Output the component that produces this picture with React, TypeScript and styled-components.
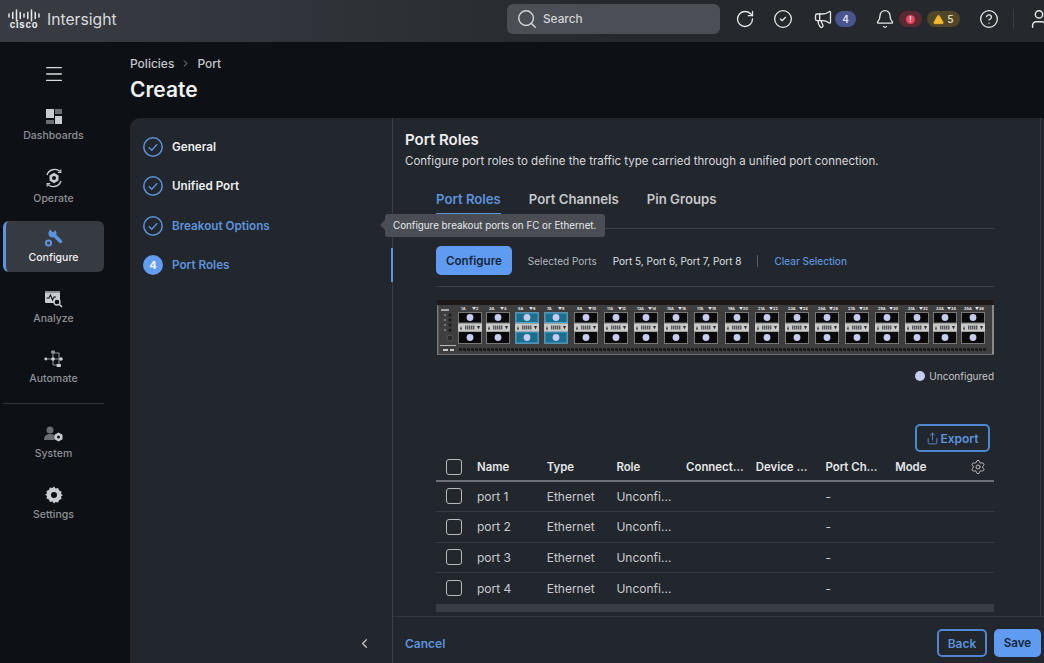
import { createGlobalStyle, styled } from "styled-components";
import {
  Bell,
  ChevronLeft,
  ChevronRight,
  CircleCheck,
  CircleHelp,
  Megaphone,
  Menu,
  RotateCw,
  Search,
  Settings,
  Share,
  TriangleAlert,
  User,
} from "lucide-react";
import type { ReactNode } from "react";

const GlobalStyle = createGlobalStyle`
  html, body {
    margin: 0;
    padding: 0;
    background: #0d1014;
    font-family: Inter, "Liberation Sans", sans-serif;
    color: #e8eaed;
    overflow: hidden;
  }
  * { box-sizing: border-box; }
`;

const Page = styled.div`
  width: 1044px;
  height: 663px;
  display: flex;
  flex-direction: column;
  overflow: hidden;
`;

/* top bar */
const TopBar = styled.header`
  height: 42px;
  flex: none;
  display: flex;
  align-items: center;
  padding-bottom: 4px;
  background: linear-gradient(90deg, #393d43 0%, #30343a 30%, #25282d 60%);
  overflow: hidden;
`;

const Brand = styled.div`
  width: 507px;
  flex: none;
  display: flex;
  align-items: center;
  padding-left: 8px;
  gap: 7px;
`;

const CiscoMark = styled.div`
  width: 32px;
  display: flex;
  flex-direction: column;
  align-items: center;
  line-height: 1;
`;

const CiscoWord = styled.span`
  font-size: 9.5px;
  font-weight: 700;
  letter-spacing: 0.7px;
  color: #e6e8ea;
  margin-top: -2px;
`;

const BrandName = styled.span`
  font-size: 15.7px;
  font-weight: 400;
  color: #d8dadd;
`;

const SearchBox = styled.div`
  width: 213px;
  height: 30px;
  flex: none;
  background: #4b4f55;
  border-radius: 6px;
  display: flex;
  align-items: center;
  gap: 5px;
  padding-left: 9px;
  font-size: 11.8px;
  font-weight: 500;
  color: #d2d4d7;
`;

const TopIcons = styled.div`
  display: flex;
  align-items: center;
  color: #e4e6e8;
  margin-left: 15px;
`;

const TopIcon = styled.span<{ $gap?: number }>`
  display: flex;
  margin-left: ${(p) => p.$gap ?? 0}px;
`;

const Pill = styled.span<{ $bg: string; $color: string; $w: number; $gap: number }>`
  height: 16px;
  width: ${(p) => p.$w}px;
  margin-left: ${(p) => p.$gap}px;
  border-radius: 8px;
  background: ${(p) => p.$bg};
  color: ${(p) => p.$color};
  font-size: 10px;
  font-weight: 600;
  display: flex;
  align-items: center;
  justify-content: center;
  gap: 3px;
`;

const RedDot = styled.span`
  width: 9px;
  height: 9px;
  background: #f0455e;
  border-radius: 50%;
  color: #fff;
  font-size: 7px;
  font-weight: 700;
  line-height: 9px;
  text-align: center;
`;

const TopDivider = styled.span`
  width: 1px;
  height: 20px;
  background: #3a3e44;
  margin-left: 14px;
`;

/* body */
const Body = styled.div`
  flex: 1;
  min-height: 0;
  display: flex;
`;

const Sidebar = styled.nav`
  width: 130px;
  flex: none;
  padding: 21px 26px 0 3px;
  display: flex;
  flex-direction: column;
  align-items: stretch;
`;

const Burger = styled.div`
  display: flex;
  justify-content: center;
  color: #d9dbde;
  height: 22px;
  margin-bottom: 15px;
`;

const NavItem = styled.div<{ $active?: boolean }>`
  height: 51px;
  margin-bottom: 9.5px;
  display: flex;
  flex-direction: column;
  align-items: center;
  justify-content: center;
  gap: 4px;
  border-radius: 6px;
  font-size: 10.5px;
  font-weight: 500;
  color: ${(p) => (p.$active ? "#f0f1f3" : "#8e9196")};
  background: ${(p) => (p.$active ? "#363a41" : "transparent")};
  border-left: 3px solid ${(p) => (p.$active ? "#5c94e0" : "transparent")};
  padding-right: 3px;
  svg {
    display: block;
  }
`;

const NavRule = styled.div`
  height: 1px;
  background: #33373c;
  margin: 0 0 14px;
`;

const Main = styled.main`
  flex: 1;
  min-width: 0;
  display: flex;
  flex-direction: column;
`;

const Crumbs = styled.div`
  display: flex;
  align-items: center;
  gap: 6px;
  height: 16px;
  margin-top: 13px;
  font-size: 12px;
  font-weight: 500;
  color: #c4c6ca;
`;

const PageTitle = styled.h1`
  margin: 5px 0 0;
  font-size: 21px;
  line-height: 28px;
  font-weight: 600;
  color: #f0f1f3;
`;

const Panel = styled.section`
  flex: 1;
  min-height: 0;
  margin-top: 14px;
  display: flex;
  background: #22262d;
  border-radius: 10px 0 0 0;
`;

const Steps = styled.div`
  width: 263px;
  flex: none;
  padding: 9.500px 0 0 13px;
  display: flex;
  flex-direction: column;
  border-right: 1px solid #3b3f46;
  position: relative;
`;

const StepRow = styled.div<{ $tone: "done" | "link" }>`
  height: 39.3px;
  display: flex;
  align-items: center;
  gap: 9px;
  font-size: 11.7px;
  font-weight: 600;
  color: ${(p) => (p.$tone === "link" ? "#5d93dc" : "#eceef0")};
`;

const StepNumber = styled.span`
  width: 20px;
  height: 20px;
  border-radius: 50%;
  background: #629cf2;
  color: #f4f7fb;
  font-size: 11px;
  font-weight: 700;
  display: flex;
  align-items: center;
  justify-content: center;
`;

const ActiveMark = styled.span`
  position: absolute;
  right: -1px;
  top: 130px;
  width: 2px;
  height: 34px;
  background: #5c94e0;
`;

const Tooltip = styled.div`
  position: absolute;
  left: 255px;
  top: 96px;
  height: 23px;
  width: 220px;
  z-index: 3;
  background: #4a4e54;
  border-radius: 3px;
  color: #e6e8ea;
  font-size: 9.8px;
  display: flex;
  align-items: center;
  padding-left: 8px;
  white-space: nowrap;
  &::before {
    content: "";
    position: absolute;
    left: -5px;
    top: 6px;
    border-style: solid;
    border-width: 5px 5px 5px 0;
    border-color: transparent #4a4e54 transparent transparent;
  }
`;

const Wizard = styled.div`
  flex: 1;
  min-width: 0;
  display: flex;
  flex-direction: column;
`;

const Content = styled.div`
  flex: 1;
  min-height: 0;
  margin-right: 3px;
  padding: 12px 46px 0 12px;
  border-right: 1px solid #34383e;
`;

const SectionTitle = styled.h2`
  margin: 0;
  font-size: 15px;
  line-height: 20px;
  font-weight: 600;
  color: #eceef0;
`;

const SectionText = styled.p`
  margin: 2px 0 0;
  font-size: 11.5px;
  line-height: 18px;
  color: #d6d8db;
  white-space: nowrap;
`;

const Inner = styled.div`
  margin-left: 31px;
`;

const Tabs = styled.div`
  height: 44px;
  margin-top: 15px;
  display: flex;
  gap: 28px;
  border-bottom: 1px solid #3b3f46;
`;

const Tab = styled.div<{ $active?: boolean }>`
  height: 29px;
  font-size: 13.2px;
  line-height: 29px;
  font-weight: 600;
  color: ${(p) => (p.$active ? "#5d93dc" : "#c5c7cb")};
  border-bottom: ${(p) => (p.$active ? "1px solid #5d93dc" : "none")};
`;

const Toolbar = styled.div`
  margin-top: 17px;
  padding-bottom: 11px;
  display: flex;
  align-items: center;
  border-bottom: 1px solid #3b3f46;
  font-size: 10px;
`;

const PrimaryButton = styled.button`
  height: 29px;
  padding: 0 10px;
  border: none;
  border-radius: 5px;
  background: #5f9bf0;
  color: #17263b;
  font-family: inherit;
  font-size: 11.6px;
  font-weight: 600;
`;

const OutlineButton = styled.button`
  height: 28px;
  display: flex;
  align-items: center;
  justify-content: center;
  gap: 1px;
  border: 2px solid #4e86cf;
  border-radius: 5px;
  background: transparent;
  color: #5d93dc;
  font-family: inherit;
  font-size: 12px;
  font-weight: 600;
`;

const ToolLabel = styled.span`
  color: #b4b7bb;
  margin-left: 16px;
`;

const ToolValue = styled.span`
  color: #dfe1e4;
  margin-left: 16px;
`;

const ToolSep = styled.span`
  width: 1px;
  height: 12px;
  background: #565a60;
  margin-left: 16px;
`;

const ClearLink = styled.span`
  color: #5d93dc;
  font-weight: 500;
  margin-left: 16px;
`;

const Faceplate = styled.svg`
  display: block;
  margin: 13px 0 0 1px;
`;

const Legend = styled.div`
  height: 16px;
  margin-top: 12px;
  display: flex;
  justify-content: flex-end;
  align-items: center;
  gap: 4px;
  font-size: 10px;
  color: #c4c6ca;
`;

const LegendDot = styled.span`
  width: 10px;
  height: 10px;
  border-radius: 50%;
  background: #c6cbf0;
`;

const ExportRow = styled.div`
  margin-top: 40px;
  display: flex;
  justify-content: flex-end;
  padding-right: 4px;
`;

const Row = styled.div<{ $head?: boolean; $last?: boolean }>`
  display: grid;
  grid-template-columns: 41px repeat(6, 69.7px) 1fr 24px;
  align-items: center;
  height: ${(p) => (p.$head ? "29.5px" : "30.5px")};
  padding-top: ${(p) => (p.$head ? "2px" : "0")};
  font-size: ${(p) => (p.$head ? "11.4px" : "12px")};
  font-weight: ${(p) => (p.$head ? 600 : 400)};
  color: ${(p) => (p.$head ? "#e4e6e8" : "#c9cbcf")};
  border-bottom: ${(p) =>
    p.$head ? "2px solid #6d7076" : p.$last ? "none" : "1px solid #373b41"};
`;

const Box = styled.span`
  width: 16px;
  height: 16px;
  margin-left: 10px;
  border: 1.5px solid #b6b9bd;
  border-radius: 3px;
`;

const HeadGear = styled.span`
  display: flex;
  color: #b6b9bd;
`;

const HScroll = styled.div`
  height: 8px;
  background: #393d44;
`;

const Footer = styled.footer`
  height: 47px;
  flex: none;
  display: flex;
  align-items: center;
  padding: 6px 3px 0 12px;
  border-top: 1px solid #34383e;
  font-size: 12px;
  font-weight: 600;
`;

const CancelLink = styled.span`
  color: #5d93dc;
  margin-right: auto;
`;

const CollapseToggle = styled.div`
  margin-top: auto;
  height: 46px;
  display: flex;
  align-items: center;
  justify-content: flex-end;
  padding: 6px 20px 0 0;
  color: #c4c6ca;
`;

const BackButton = styled(OutlineButton)`
  width: 50px;
`;

const ExportButton = styled(OutlineButton)`
  width: 75px;
`;

const SaveButton = styled(PrimaryButton)`
  width: 47px;
  height: 28px;
  padding: 0;
  margin-left: 7px;
`;

const tile = "#c9ccd1";
const dim = "#6a6e74";

const DashboardsIcon = () => (
  <svg width="16" height="16" viewBox="0 0 16 16">
    <rect x="0" y="0" width="8" height="9" fill={tile} />
    <rect x="9" y="0" width="7" height="5" fill={dim} />
    <rect x="0" y="11" width="8" height="4" fill={dim} />
    <rect x="9" y="7" width="7" height="8" fill={tile} />
  </svg>
);

const OperateIcon = () => (
  <svg width="20" height="20" viewBox="0 0 20 20" fill="none" stroke={tile}>
    <path d="M3 7a8 8 0 0 1 13-3.500M17 13a8 8 0 0 1-13 3.500" strokeWidth="1.400" />
    <path d="M16.800 1.500v3h-3M3.200 18.500v-3h3" strokeWidth="1.200" />
    <path d="M10 4.800l4.500 2.600v5.200L10 15.200l-4.500-2.600V7.400z" fill={tile} stroke="none" />
    <circle cx="10" cy="10" r="2" fill="#0d1014" stroke="none" />
  </svg>
);

const ConfigureIcon = () => (
  <svg width="18" height="18" viewBox="0 0 18 18" fill="#5c94e0">
    <circle cx="7.500" cy="4.500" r="4" />
    <polygon points="7.500,4.500 5.500,-0.500 11,0" fill="#363a41" />
    <path d="M7.500 4.500L15.500 12.500" stroke="#5c94e0" strokeWidth="3.400" strokeLinecap="round" />
    <circle cx="3.500" cy="14" r="2.600" fill="none" stroke="#5c94e0" strokeWidth="2" />
  </svg>
);

const AnalyzeIcon = () => (
  <svg width="18" height="18" viewBox="0 0 18 18">
    <rect x="0" y="1" width="15" height="12" rx="1" fill={tile} />
    <rect x="0" y="1" width="15" height="2" fill="#8d9095" />
    <path d="M1.500 8h2.500l1.500-3 2 5 1.500-3h2" fill="none" stroke="#0d1014" strokeWidth="1.100" />
    <circle cx="12" cy="12" r="3" fill="#0d1014" stroke={tile} strokeWidth="1.300" />
    <path d="M14.200 14.200L17 17" stroke={tile} strokeWidth="1.600" />
  </svg>
);

const AutomateIcon = () => (
  <svg width="20" height="18" viewBox="0 0 20 18" fill="none">
    <path d="M3 9h14M9 3v12M9 3h6v12H9" stroke="#8d9095" strokeWidth="1.100" />
    <circle cx="1.800" cy="9" r="1.400" fill={tile} />
    <circle cx="9" cy="9" r="1.800" fill={tile} />
    <circle cx="17" cy="9" r="1.800" fill={tile} />
    <rect x="7" y="0.500" width="4" height="3" rx="1" fill="#8d9095" />
    <rect x="12.500" y="14" width="4.500" height="3" rx="1" fill={tile} />
  </svg>
);

const SystemIcon = () => (
  <svg width="20" height="17" viewBox="0 0 20 17">
    <circle cx="6" cy="4" r="3.500" fill={dim} />
    <path d="M0 14c0-4 2.500-6 6-6s5 1.500 5.500 3.500L10 14z" fill={dim} />
    <path d="M14.500 6.500l4 2.300v4.400l-4 2.300-4-2.300V8.800z" fill={tile} />
    <circle cx="14.500" cy="11" r="1.500" fill="#0d1014" />
  </svg>
);

const SettingsIcon = () => (
  <svg width="18" height="18" viewBox="0 0 18 18">
    <path
      d="M9 0.500l1.600 2 2.500-.5 1 2.400 2.400 1-.5 2.500 2 1.100-2 1.600.5 2.500-2.400 1-1 2.400-2.500-.5L9 17.500l-1.600-2-2.500.5-1-2.400-2.400-1 .5-2.500-2-1.600 2-1.100-.5-2.500 2.400-1 1-2.400 2.500.5z"
      fill={tile}
    />
    <circle cx="9" cy="9" r="3" fill="#0d1014" />
  </svg>
);

const CiscoBars = () => (
  <svg width="32" height="13" viewBox="0 0 32 13" stroke="#e6e8ea" strokeWidth="1.500" strokeLinecap="round">
    {[1, 4.750, 8.500, 12.250, 16, 19.750, 23.500, 27.250, 31].map((x, i) => {
      const half = [1.500, 3, 5.500, 3, 1.500, 3, 5.500, 3, 1.500][i];
      return <line key={x} x1={x} x2={x} y1={6.500 - half} y2={6.500 + half} />;
    })}
  </svg>
);

const portXs = [33, 61, 90, 119, 149, 179, 209, 239, 269, 300, 330, 360, 390, 420, 450, 480, 508, 536];
const bandTicks = [-5, -3, -1, 1, 3];

const Switch = () => (
  <Faceplate width="557" height="56" viewBox="0 0 557 56">
    <rect x="0" y="0" width="557" height="55" rx="2" fill="#3f3e3f" />
    <rect x="0" y="0" width="557" height="5" fill="#1f1a1a" />
    <rect x="0" y="5" width="1.500" height="50" fill="#77787a" />
    <rect x="555" y="5" width="2" height="50" fill="#8a8b8c" />
    <rect x="0" y="54" width="557" height="1" fill="#6f7072" />
    <rect x="4" y="9" width="8" height="2" fill="#a5a6a8" />
    {[15, 20, 25, 30].map((y) => (
      <g key={y}>
        <circle cx="8" cy={y} r="0.800" fill="#c8c8c8" />
        <circle cx="13" cy={y} r="1.500" fill="#17181a" />
      </g>
    ))}
    <circle cx="13" cy="38" r="3" fill="#2a2b2d" stroke="#77787a" strokeWidth="0.500" />
    <rect x="3" y="45" width="16" height="1" fill="#b8b9bb" />
    <rect x="6" y="49" width="5" height="2" fill="#c9c9c9" />
    <rect x="13" y="49" width="4" height="2" fill="#c9c9c9" />
    <line x1="22" x2="550" y1="49.500" y2="49.500" stroke="#151618" strokeWidth="2.500" strokeDasharray="3 1" />
    {portXs.map((x, i) => {
      const selected = i === 2 || i === 3;
      const odd = i * 2 + 1;
      return (
        <g key={x}>
          <text x={x - 9} y="10" fontSize="3.800" fontWeight="700" fill="#e8e8e8" fontFamily="Inter, sans-serif">
            {odd}A
          </text>
          <text x={x + 2} y="10" fontSize="3.800" fontWeight="700" fill="#e8e8e8" fontFamily="Inter, sans-serif">
            ▼{odd + 1}
          </text>
          <rect x={x - 12} y="12" width="24" height="32" fill="#77787a" />
          <rect
            x={x - 11}
            y="13"
            width="22"
            height="9.500"
            fill={selected ? "#1d6d8f" : "#0b0a0b"}
            stroke={selected ? "#3fa9dc" : "none"}
          />
          <rect
            x={x - 11}
            y="32"
            width="22"
            height="11"
            fill={selected ? "#1d6d8f" : "#0b0a0b"}
            stroke={selected ? "#3fa9dc" : "none"}
          />
          <rect x={x - 12} y="23.500" width="24" height="8" fill="#c9c9c7" />
          {bandTicks.map((t) => (
            <rect key={t} x={x + t} y="25.500" width="1.400" height="4" fill="#55565a" />
          ))}
          <polygon points={`${x - 10},29.500 ${x - 8},29.500 ${x - 9},26`} fill="#2a2a2c" />
          <polygon points={`${x + 7},26 ${x + 10},26 ${x + 8.500},29.500`} fill="#2a2a2c" />
          <circle cx={x} cy="17.500" r="3.400" fill="#c6cbf0" />
          <circle cx={x} cy="37.500" r="3.400" fill="#c6cbf0" />
        </g>
      );
    })}
  </Faceplate>
);

const navTop: { label: string; icon: ReactNode; active?: boolean }[] = [
  { label: "Dashboards", icon: <DashboardsIcon /> },
  { label: "Operate", icon: <OperateIcon /> },
  { label: "Configure", icon: <ConfigureIcon />, active: true },
  { label: "Analyze", icon: <AnalyzeIcon /> },
  { label: "Automate", icon: <AutomateIcon /> },
];

const navBottom: { label: string; icon: ReactNode }[] = [
  { label: "System", icon: <SystemIcon /> },
  { label: "Settings", icon: <SettingsIcon /> },
];

const columns = ["Name", "Type", "Role", "Connect…", "Device …", "Port Ch…", "Mode"];
const ports = ["port 1", "port 2", "port 3", "port 4"];

const DoneMark = () => (
  <svg width="20" height="20" viewBox="0 0 20 20" fill="none" stroke="#5b93dd">
    <circle cx="10" cy="10" r="9.200" strokeWidth="1.500" />
    <path d="M5.800 10.300l3 3 5.400-6" strokeWidth="1.300" />
  </svg>
);

const App = () => {
  return (
    <Page>
      <GlobalStyle />
      <TopBar>
        <Brand>
          <CiscoMark>
            <CiscoBars />
            <CiscoWord>cisco</CiscoWord>
          </CiscoMark>
          <BrandName>Intersight</BrandName>
        </Brand>
        <SearchBox>
          <Search size={22} strokeWidth={1.6} />
          Search
        </SearchBox>
        <TopIcons>
          <TopIcon>
            <RotateCw size={20} strokeWidth={1.6} />
          </TopIcon>
          <TopIcon $gap={18}>
            <CircleCheck size={20} strokeWidth={1.6} />
          </TopIcon>
          <TopIcon $gap={20}>
            <Megaphone size={20} strokeWidth={1.6} />
          </TopIcon>
          <Pill $bg="#4a5590" $color="#dfe2f2" $w={21} $gap={2}>
            4
          </Pill>
          <TopIcon $gap={19}>
            <Bell size={20} strokeWidth={1.6} />
          </TopIcon>
          <Pill $bg="#5a2a33" $color="#fff" $w={23} $gap={4}>
            <RedDot>!</RedDot>
          </Pill>
          <Pill $bg="#51452a" $color="#e4d9b4" $w={33} $gap={5}>
            <TriangleAlert size={11} fill="#f2b92c" color="#f2b92c" />5
          </Pill>
          <TopIcon $gap={19}>
            <CircleHelp size={20} strokeWidth={1.6} />
          </TopIcon>
          <TopDivider />
          <TopIcon $gap={14}>
            <User size={22} strokeWidth={1.6} />
          </TopIcon>
        </TopIcons>
      </TopBar>
      <Body>
        <Sidebar>
          <Burger>
            <Menu size={22} strokeWidth={1.5} />
          </Burger>
          {navTop.map((item) => (
            <NavItem key={item.label} $active={item.active}>
              {item.icon}
              {item.label}
            </NavItem>
          ))}
          <NavRule />
          {navBottom.map((item) => (
            <NavItem key={item.label}>
              {item.icon}
              {item.label}
            </NavItem>
          ))}
        </Sidebar>
        <Main>
          <Crumbs>
            Policies
            <ChevronRight size={11} color="#8e9196" />
            Port
          </Crumbs>
          <PageTitle>Create</PageTitle>
          <Panel>
            <Steps>
              <StepRow $tone="done">
                <DoneMark />
                General
              </StepRow>
              <StepRow $tone="done">
                <DoneMark />
                Unified Port
              </StepRow>
              <StepRow $tone="link">
                <DoneMark />
                Breakout Options
              </StepRow>
              <StepRow $tone="link">
                <StepNumber>4</StepNumber>
                Port Roles
              </StepRow>
              <ActiveMark />
              <Tooltip>Configure breakout ports on FC or Ethernet.</Tooltip>
              <CollapseToggle>
                <ChevronLeft size={15} />
              </CollapseToggle>
            </Steps>
            <Wizard>
              <Content>
                <SectionTitle>Port Roles</SectionTitle>
                <SectionText>
                  Configure port roles to define the traffic type carried through a unified port connection.
                </SectionText>
                <Inner>
                  <Tabs>
                    <Tab $active>Port Roles</Tab>
                    <Tab>Port Channels</Tab>
                    <Tab>Pin Groups</Tab>
                  </Tabs>
                  <Toolbar>
                    <PrimaryButton>Configure</PrimaryButton>
                    <ToolLabel>Selected Ports</ToolLabel>
                    <ToolValue>Port 5, Port 6, Port 7, Port 8</ToolValue>
                    <ToolSep />
                    <ClearLink>Clear Selection</ClearLink>
                  </Toolbar>
                  <Switch />
                  <Legend>
                    <LegendDot />
                    Unconfigured
                  </Legend>
                  <ExportRow>
                    <ExportButton>
                      <Share size={13} strokeWidth={1.6} />
                      Export
                    </ExportButton>
                  </ExportRow>
                  <Row $head>
                    <Box />
                    {columns.map((c) => (
                      <span key={c}>{c}</span>
                    ))}
                    <HeadGear>
                      <Settings size={16} strokeWidth={1.5} />
                    </HeadGear>
                  </Row>
                  {ports.map((p, i) => (
                    <Row key={p} $last={i === ports.length - 1}>
                      <Box />
                      <span>{p}</span>
                      <span>Ethernet</span>
                      <span>Unconfi…</span>
                      <span />
                      <span />
                      <span>-</span>
                    </Row>
                  ))}
                  <HScroll />
                </Inner>
              </Content>
              <Footer>
                <CancelLink>Cancel</CancelLink>
                <BackButton>Back</BackButton>
                <SaveButton>Save</SaveButton>
              </Footer>
            </Wizard>
          </Panel>
        </Main>
      </Body>
    </Page>
  );
};

export default App;
